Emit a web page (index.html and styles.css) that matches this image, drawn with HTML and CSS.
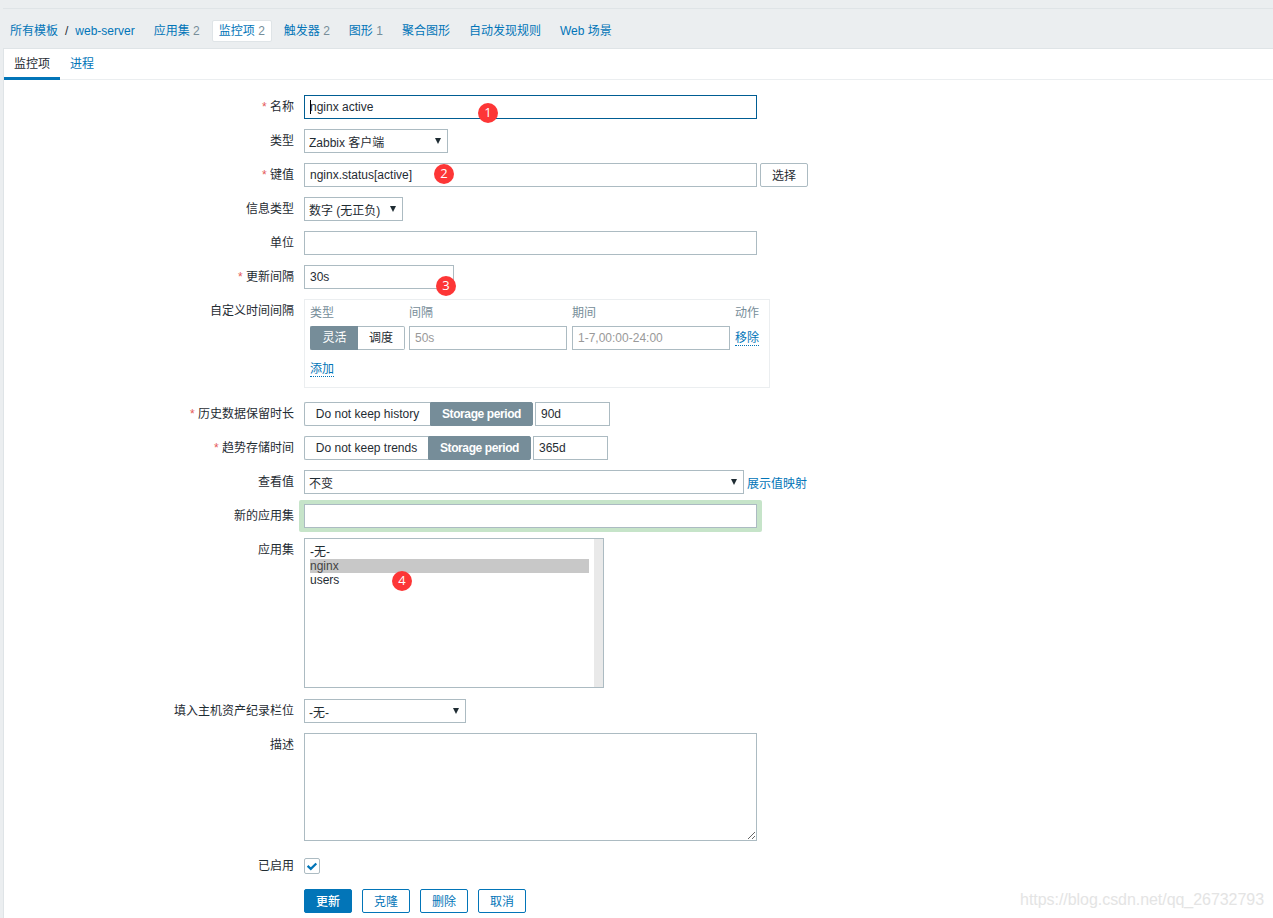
FILE: index.html
```html
<!DOCTYPE html>
<html lang="zh-CN">
<head>
    <meta charset="UTF-8">
    <meta name="viewport" content="width=device-width, initial-scale=1">
    <title>监控项</title>
    <link rel="stylesheet" href="styles.css">
</head>
<body>
    <nav class="filter-breadcrumb">
        <a href="#">所有模板</a>
        <span class="slash">/</span>
        <a href="#" class="host">web-server</a>
        <span class="crumb"><a href="#">应用集</a> <sup>2</sup></span>
        <span class="crumb selected"><a href="#">监控项</a> <sup>2</sup></span>
        <span class="crumb"><a href="#">触发器</a> <sup>2</sup></span>
        <span class="crumb"><a href="#">图形</a> <sup>1</sup></span>
        <span class="crumb"><a href="#">聚合图形</a></span>
        <span class="crumb"><a href="#">自动发现规则</a></span>
        <span class="crumb"><a href="#">Web 场景</a></span>
    </nav>

    <main class="panel">
        <div class="tabs">
            <a href="#" class="tab active">监控项</a>
            <a href="#" class="tab">进程</a>
        </div>

        <form class="item-form">
            <div class="row">
                <label class="required">名称</label>
                <div class="field">
                    <input type="text" class="wide focused" value="nginx active">
                    <span class="caret"></span>
                    <span class="badge badge-1">1</span>
                </div>
            </div>
            <div class="row">
                <label>类型</label>
                <div class="field">
                    <div class="select type"><select><option>Zabbix 客户端</option></select></div>
                </div>
            </div>
            <div class="row">
                <label class="required">键值</label>
                <div class="field">
                    <input type="text" class="wide" value="nginx.status[active]">
                    <button type="button" class="btn-grey">选择</button>
                    <span class="badge badge-2">2</span>
                </div>
            </div>
            <div class="row">
                <label>信息类型</label>
                <div class="field">
                    <div class="select value-type"><select><option>数字 (无正负)</option></select></div>
                </div>
            </div>
            <div class="row">
                <label>单位</label>
                <div class="field"><input type="text" class="wide"></div>
            </div>
            <div class="row">
                <label class="required">更新间隔</label>
                <div class="field">
                    <input type="text" class="delay" value="30s">
                    <span class="badge badge-3">3</span>
                </div>
            </div>
            <div class="row intervals-row">
                <label>自定义时间间隔</label>
                <div class="field">
                    <div class="intervals">
                        <span class="head">类型</span>
                        <span class="head">间隔</span>
                        <span class="head">期间</span>
                        <span class="head">动作</span>
                        <div class="radio flex-type">
                            <span class="on">灵活</span>
                            <span class="off">调度</span>
                        </div>
                        <input type="text" placeholder="50s">
                        <input type="text" placeholder="1-7,00:00-24:00">
                        <div class="action"><a href="#" class="dotted">移除</a></div>
                        <div class="action add"><a href="#" class="dotted">添加</a></div>
                    </div>
                </div>
            </div>
            <div class="row">
                <label class="required">历史数据保留时长</label>
                <div class="field">
                    <div class="radio history">
                        <span class="off">Do not keep history</span>
                        <span class="on">Storage period</span>
                    </div>
                    <input type="text" class="period" value="90d">
                </div>
            </div>
            <div class="row">
                <label class="required">趋势存储时间</label>
                <div class="field">
                    <div class="radio trends">
                        <span class="off">Do not keep trends</span>
                        <span class="on">Storage period</span>
                    </div>
                    <input type="text" class="period" value="365d">
                </div>
            </div>
            <div class="row">
                <label>查看值</label>
                <div class="field">
                    <div class="select valuemap"><select><option>不变</option></select></div>
                    <a href="#" class="map-link">展示值映射</a>
                </div>
            </div>
            <div class="row">
                <label>新的应用集</label>
                <div class="field">
                    <div class="highlight"><input type="text" class="wide"></div>
                </div>
            </div>
            <div class="row listbox-row">
                <label>应用集</label>
                <div class="field">
                    <div class="listbox">
                        <ul>
                            <li class="none">-无-</li>
                            <li class="selected">nginx</li>
                            <li>users</li>
                        </ul>
                        <div class="scrollbar"></div>
                    </div>
                    <span class="badge badge-4">4</span>
                </div>
            </div>
            <div class="row">
                <label>填入主机资产纪录栏位</label>
                <div class="field">
                    <div class="select inventory"><select><option>-无-</option></select></div>
                </div>
            </div>
            <div class="row description-row">
                <label>描述</label>
                <div class="field"><textarea></textarea></div>
            </div>
            <div class="row enabled-row">
                <label>已启用</label>
                <div class="field">
                    <span class="checkbox">
                        <svg width="14" height="14" viewBox="0 0 14 14"><path d="M2.6 6.9 L5.8 9.9 L11.3 4.5" fill="none" stroke="#0275b8" stroke-width="2.2"/></svg>
                    </span>
                </div>
            </div>
            <div class="buttons">
                <button type="button" class="primary">更新</button>
                <button type="button">克隆</button>
                <button type="button">删除</button>
                <button type="button">取消</button>
            </div>
        </form>
    </main>
    <div class="watermark">https://blog.csdn.net/qq_26732793</div>
</body>
</html>
```
FILE: styles.css
```css
* {
    box-sizing: border-box;
}
body {
    margin: 0;
    padding: 8px 0 0 3px;
    height: 918px;
    overflow: hidden;
    display: flex;
    flex-direction: column;
    background-color: #ebeef0;
    color: #1f2c33;
    font-family: "Liberation Sans", "Noto Sans CJK SC", sans-serif;
    font-size: 12px;
}
a {
    color: #0275b8;
    text-decoration: none;
}
input, select, textarea, button {
    margin: 0;
    font-family: inherit;
    font-size: 12px;
    color: #1f2c33;
    outline: none;
}

/* Top navigation */
.filter-breadcrumb {
    display: flex;
    align-items: center;
    height: 40px;
    padding: 5px 0 0 7px;
    border-top: 1px solid #dfe4e7;
    line-height: 20px;
    white-space: nowrap;
}
.slash {
    margin: 0 7px;
}
.host {
    margin-right: 12px;
}
.crumb {
    height: 22px;
    padding: 0 6px;
    margin-right: 5px;
    border: 1px solid transparent;
    border-radius: 2px;
}
.crumb.selected {
    background-color: #fff;
    border-color: #dfe4e7;
}
.crumb sup {
    font-size: 12px;
    vertical-align: baseline;
    line-height: 1;
    color: #768d99;
}

.panel {
    flex: 1;
    background-color: #fff;
    border: 1px solid #dfe4e7;
    border-width: 1px 0 0 1px;
}
.tabs {
    display: flex;
    height: 31px;
    border-bottom: 1px solid #ebeef0;
}
.tab {
    height: 31px;
    padding: 0 10px;
    line-height: 31px;
}
.tab.active {
    color: #1f2c33;
    border-bottom: 3px solid #0275b8;
}

/* Form */
.item-form {
    padding-top: 15px;
}
.row {
    display: flex;
    min-height: 24px;
    margin-bottom: 10px;
}
.row label {
    width: 290px;
    margin-right: 10px;
    line-height: 24px;
    text-align: right;
}
.required::before {
    content: "* ";
    color: #e45959;
}
.field {
    display: flex;
    position: relative;
}
input {
    height: 24px;
    padding: 0 5px;
    border: 1px solid #acbbc2;
    background-color: #fff;
}
input::placeholder {
    color: #999;
}
.wide {
    width: 453px;
}
.focused {
    border-color: #005d93;
}
.caret {
    position: absolute;
    left: 6px;
    top: 5px;
    width: 1px;
    height: 14px;
    background-color: #000;
}
.delay {
    width: 150px;
}
.period {
    width: 75px;
    margin-left: 2px;
}

.select {
    position: relative;
    height: 24px;
}
.select select {
    appearance: none;
    width: 100%;
    height: 24px;
    padding: 3px 4px 0;
    border: 1px solid #acbbc2;
    border-radius: 0;
    background-color: #fff;
}
.select::after {
    content: "";
    position: absolute;
    right: 7px;
    top: 9px;
    border: 3px solid transparent;
    border-top: 6px solid #1f2c33;
    border-bottom: 0;
}
.type {
    width: 144px;
}
.value-type {
    width: 99px;
}
.valuemap {
    width: 440px;
}
.inventory {
    width: 162px;
}
.map-link {
    height: 24px;
    margin-left: 3px;
    line-height: 28px;
}

button {
    width: 48px;
    height: 24px;
    padding: 0 0 2px;
    border: 1px solid #0275b8;
    border-radius: 2px;
    background-color: #fff;
    color: #0275b8;
}
.btn-grey {
    margin-left: 3px;
    border-color: #acbbc2;
    color: #1f2c33;
}

.radio {
    display: flex;
    height: 24px;
    line-height: 22px;
    text-align: center;
    white-space: nowrap;
}
.radio span {
    border: 1px solid #acbbc2;
}
.radio .on {
    background-color: #768d99;
    border-color: #768d99;
    color: #fff;
}
.radio span:first-child {
    border-right: 0;
    border-radius: 2px 0 0 2px;
}
.radio span:last-child {
    border-radius: 0 2px 2px 0;
}
.flex-type .on {
    width: 48px;
}
.flex-type .off {
    width: 47px;
    border-left: 0;
}
.history .off {
    width: 126px;
}
.trends .off {
    width: 124px;
}
.history .on, .trends .on {
    width: 103px;
    font-weight: bold;
    letter-spacing: -0.4px;
}

.intervals-row {
    margin-bottom: 14px;
}
.intervals {
    display: grid;
    grid-template-columns: 94px 158px 158px 24px;
    grid-template-rows: 22px 24px 22px;
    column-gap: 5px;
    width: 466px;
    height: 89px;
    padding: 4px 5px;
    border: 1px solid #ebeef0;
}
.intervals .flex-type {
    width: 95px;
}
.head {
    color: #768d99;
    line-height: 18px;
}
.action {
    line-height: 24px;
}
.add {
    padding-top: 7px;
}
.dotted {
    display: inline-block;
    line-height: 13px;
    border-bottom: 1px dotted #0275b8;
}
.highlight {
    margin: -4px -5px;
    padding: 4px 5px;
    height: 32px;
    border-radius: 2px;
    background-color: #c6e4c9;
}
.highlight input {
    display: block;
}

.listbox-row {
    margin-bottom: 11px;
}
.listbox {
    display: flex;
    width: 300px;
    height: 150px;
    border: 1px solid #acbbc2;
}
.listbox ul {
    flex: 1;
    margin: 0;
    padding: 5px;
    list-style: none;
}
.listbox li {
    height: 14px;
    line-height: 14px;
}
.listbox .none {
    height: 15px;
    line-height: 16px;
}
.listbox .selected {
    background-color: #c8c8c8;
    color: #444;
}
.scrollbar {
    width: 9px;
    background-color: #e9e9e9;
}

.description-row {
    margin-bottom: 13px;
}
textarea {
    display: block;
    width: 453px;
    height: 108px;
    border: 1px solid #acbbc2;
    resize: both;
}
.enabled-row {
    margin-bottom: 11px;
}
.checkbox {
    width: 16px;
    height: 16px;
    margin-top: 4px;
    border: 1px solid #acbbc2;
    border-radius: 2px;
}
.checkbox svg {
    display: block;
}
.buttons {
    display: flex;
    gap: 10px;
    padding-left: 300px;
}
.buttons .primary {
    background-color: #0275b8;
    color: #fff;
    font-weight: 500;
}

/* Numbered marks over the fields */
.badge {
    position: absolute;
    width: 20px;
    height: 20px;
    border-radius: 50%;
    background-color: #fd3636;
    color: #fff;
    font-family: "Open Sans", sans-serif;
    font-size: 13px;
    line-height: 19px;
    text-align: center;
}
.badge-1 {
    left: 174px;
    top: 8px;
}
.badge-2 {
    left: 130px;
    top: 1px;
}
.badge-3 {
    left: 132px;
    top: 11px;
    z-index: 1;
}
.badge-4 {
    left: 88px;
    top: 33px;
}
.watermark {
    position: absolute;
    right: 9px;
    bottom: 9px;
    font-size: 16px;
    line-height: 18px;
    letter-spacing: -0.05px;
    color: #e4e4e4;
}
```
